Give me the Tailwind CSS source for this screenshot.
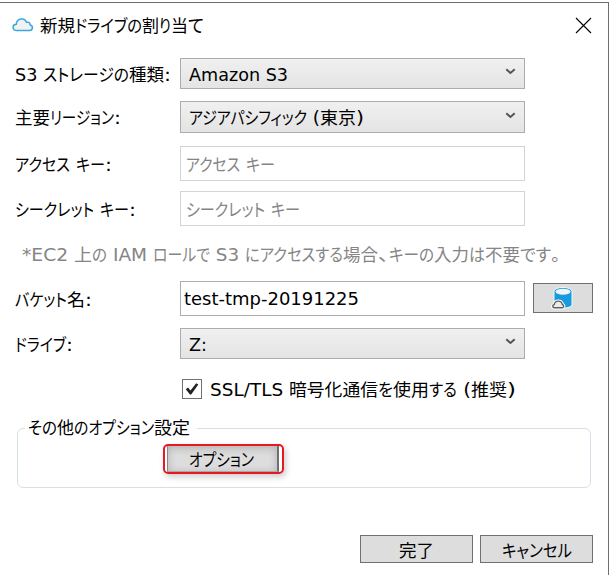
<!DOCTYPE html>
<html lang="ja">
<head>
<meta charset="utf-8">
<title>新規ドライブの割り当て</title>
<script src="https://cdn.jsdelivr.net/npm/@tailwindcss/browser@4"></script>
</head>
<body class="w-[610px] h-[575px] overflow-hidden bg-white pt-[2px] font-['DejaVu_Sans','Noto_Sans_CJK_JP',sans-serif] text-[17.5px] leading-[24px] text-black">
<main class="flex flex-col w-[609px] h-[573px] border-t border-r border-[#6e6e6e] [&_span]:whitespace-pre [&_section_span]:pt-[2px]">
<header class="flex h-[44px] items-center pl-[12px] pr-[16px]"><svg class="w-[22px] h-[16px] mb-[1px]" viewBox="0 0 22 16"><path d="M5 13.5C-.3 13.3.1 7.5 4.3 7.3C4.5 1.4 12.8-.1 14.5 5.4C17.5 4.5 18.3 6.3 18 7.8C21.7 9 20.8 13.3 17.5 13.5Z" fill="#f2f2f2" stroke="#38a9e0" stroke-width="1.5"/></svg><div class="flex ml-[6px] mt-[1px]"><span data-w="35">新規</span><span data-w="67">ドライブの</span><span data-w="17">割</span><span data-w="12">り</span><span data-w="17">当</span><span data-w="16">て</span></div><svg class="ml-auto w-[17px] h-[17px]" viewBox="0 0 17 17"><path d="M1 1L16 16M16 1L1 16" stroke="#000" stroke-width="1.1"/></svg></header>

<section class="flex flex-col pl-[15px] pt-[11px]">
<div class="flex h-[31px] items-center"><div class="flex w-[165px]"><span data-w="28">S3 </span><span data-w="86">ストレージの</span><span data-w="35">種類</span><span data-w="7">:</span></div><div class="flex h-[31px] w-[345px] items-center border border-[#acacac] bg-linear-to-b from-[#f0f0f0] to-[#e4e4e4] pl-[8px] pr-[8px]"><span data-w="99">Amazon S3</span><svg class="ml-auto mb-[4px] w-[11px] h-[7px]" viewBox="0 0 11 7"><path d="M1.3 1.3L5.5 5L9.7 1.3" fill="none" stroke="#555" stroke-width="2"/></svg></div></div>

<div class="mt-[12px] flex h-[32px] items-center"><div class="flex w-[165px]"><span data-w="35">主要</span><span data-w="64">リージョン</span><span data-w="7">:</span></div><div class="flex h-[32px] w-[345px] items-center border border-[#acacac] bg-linear-to-b from-[#f0f0f0] to-[#e4e4e4] pl-[8px] pr-[8px]"><span data-w="118">アジアパシフィック</span><span data-w="13"> (</span><span data-w="36">東京</span><span data-w="8">)</span><svg class="ml-auto mb-[4px] w-[11px] h-[7px]" viewBox="0 0 11 7"><path d="M1.3 1.3L5.5 5L9.7 1.3" fill="none" stroke="#555" stroke-width="2"/></svg></div></div>

<div class="mt-[13px] flex h-[35px] items-center"><div class="flex w-[165px]"><span data-w="55">アクセス</span><span data-w="6"> </span><span data-w="29">キー</span><span data-w="7">:</span></div><div class="flex h-[35px] w-[345px] items-center border border-[#d2d4d9] pl-[5px] text-[#858585]"><span data-w="54">アクセス</span><span data-w="6"> </span><span data-w="29">キー</span></div></div>

<div class="mt-[10px] flex h-[35px] items-center"><div class="flex w-[165px]"><span data-w="79">シークレット</span><span data-w="6"> </span><span data-w="29">キー</span><span data-w="7">:</span></div><div class="flex h-[35px] w-[345px] items-center border border-[#d2d4d9] pl-[5px] text-[#858585]"><span data-w="79">シークレット</span><span data-w="6"> </span><span data-w="29">キー</span></div></div>

<p class="mt-[15px] mb-[1px] ml-[7px] flex h-[24px] text-[#858585]"><span data-w="52">*EC2 </span><span data-w="18">上</span><span data-w="15">の</span><span data-w="46"> IAM </span><span data-w="57">ロールで</span><span data-w="35"> S3 </span><span data-w="98">にアクセスする</span><span data-w="35">場合</span><span data-w="11">、</span><span data-w="45">キーの</span><span data-w="35">入力</span><span data-w="16">は</span><span data-w="35">不要</span><span data-w="31">です</span><span data-w="9">。</span></p>

<div class="mt-[15px] flex h-[35px] items-center"><div class="flex w-[165px]"><span data-w="52">バケット</span><span data-w="18">名</span><span data-w="7">:</span></div><div class="flex h-[35px] w-[345px] items-center border border-[#abadb3] pl-[3px] pb-[1px]"><span data-w="175">test-tmp-20191225</span></div><button class="ml-[8px] mb-[1px] flex h-[30px] w-[60px] items-center justify-center border border-[#707070] bg-[#ddd]"><svg class="w-[22px] h-[24px] mr-[2px]" viewBox="0 0 22 24"><path d="M3 5V19Q4.5 22 12 22Q19.5 22 21 19V5Q19.5 1.5 12 1.5Q4.5 1.5 3 5Z" fill="#189bdc" stroke="#eef7fb" stroke-width="1"/><ellipse cx="12" cy="5.7" rx="7.5" ry="3" fill="#f0f5f7"/><path d="M2.8 21.7C1.2 21.2 1.5 18.7 3.2 18.5C4.2 14 10.5 14 11.3 18.5C13 18.7 13.2 21.2 11.7 21.7Z" fill="#ededed" stroke="#fff" stroke-width="3.4"/><path d="M2.8 21.7C1.2 21.2 1.5 18.7 3.2 18.5C4.2 14 10.5 14 11.3 18.5C13 18.7 13.2 21.2 11.7 21.7Z" fill="#ededed" stroke="#606060" stroke-width="1.4"/></svg></button></div>

<div class="mt-[12px] flex h-[31px] items-center"><div class="flex w-[165px]"><span data-w="51">ドライブ</span><span data-w="7">:</span></div><div class="flex h-[31px] w-[345px] items-center border border-[#acacac] bg-linear-to-b from-[#f0f0f0] to-[#e4e4e4] pl-[8px] pr-[8px]"><span data-w="18">Z:</span><svg class="ml-auto mb-[4px] w-[11px] h-[7px]" viewBox="0 0 11 7"><path d="M1.3 1.3L5.5 5L9.7 1.3" fill="none" stroke="#555" stroke-width="2"/></svg></div></div>

<div class="mt-[18px] ml-[167px] flex h-[24px] items-center"><div class="flex h-[20px] w-[20px] items-center justify-center border border-[#707070]"><svg class="h-[14px] w-[14px]" viewBox="0 0 14 14"><path d="M.8 7.3L3 5.5L5.5 8.6L11.2 1.3L13.3 2.6L6.2 12.5H4.9Z" fill="#212121"/></svg></div><div class="ml-[8px] flex"><span data-w="79">SSL/TLS </span><span data-w="89">暗号化通信</span><span data-w="15">を</span><span data-w="36">使用</span><span data-w="28">する</span><span data-w="14"> (</span><span data-w="36">推奨</span><span data-w="9">)</span></div></div>
</section>

<fieldset class="mt-[15px] ml-[17px] h-[72px] w-[574px] rounded-[6px] border border-[#d5dfe5]"><legend class="ml-[7px] flex h-[25px] pl-[3px] pr-[7px]"><span data-w="29">その</span><span data-w="17">他</span><span data-w="80">のオプション</span><span data-w="36">設定</span></legend><div class="ml-[145px] mt-[3px] flex h-[30px] w-[121px] rounded-[5px] border-2 border-[#e81820] pl-[2px] shadow-[2px_3px_6px_#0003]"><button class="flex h-[26px] w-[112px] items-center justify-center border-r-2 border-b border-l border-r-[#707070] border-b-[#a8a8a8] border-l-[#888] bg-[#ddd] pt-[2px] pr-[3px] shadow-[inset_0_2px_8px_#0003]"><span data-w="65">オプション</span></button></div></fieldset>

<footer class="mt-auto mb-[12px] flex justify-end gap-[7px] pr-[15px]"><button class="flex h-[28px] w-[113px] items-center justify-center border border-[#707070] bg-[#ddd] pt-[3px]"><span data-w="35">完了</span></button><button class="flex h-[28px] w-[113px] items-center justify-center border border-[#707070] bg-[#ddd] pt-[3px]"><span data-w="70">キャンセル</span></button></footer>
</main>
<script>
// Condense each text run to its UI-font advance width.
function fitRuns() {
  for (const el of document.querySelectorAll('[data-w]')) {
    el.style.display = 'block';
    el.style.flex = 'none';
    el.style.fontFeatureSettings = '"palt"';
    el.style.width = 'max-content';
    el.style.transform = 'none';
    const w = +el.dataset.w;
    const natural = el.getBoundingClientRect().width;
    el.style.width = w + 'px';
    el.style.transformOrigin = '0 50%';
    if (natural) el.style.transform = `scaleX(${w / natural})`;
  }
}
fitRuns();
addEventListener('load', () => { fitRuns(); requestAnimationFrame(fitRuns); });
</script>
</body>
</html>
